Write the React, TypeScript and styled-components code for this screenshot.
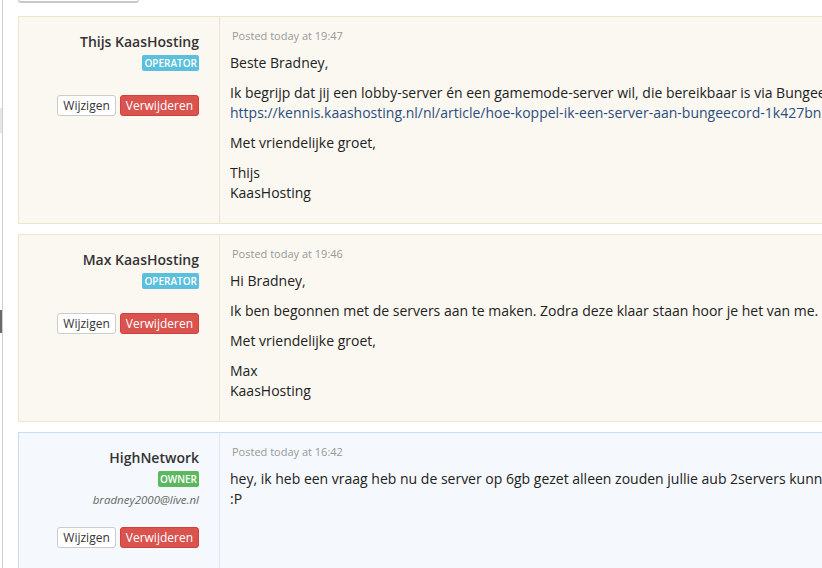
import { createGlobalStyle, styled } from 'styled-components';

const GlobalStyle = createGlobalStyle`
  html, body {
    margin: 0;
    padding: 0;
    background: #fff;
    overflow: hidden;
  }
  body {
    font-family: "Open Sans", "Liberation Sans", sans-serif;
    font-size: 14px;
    color: #333;
  }
  * { box-sizing: border-box; }
`;

type Line = { text: string; link?: boolean };

type Reply = {
  name: string;
  role: 'operator' | 'owner';
  email?: string;
  posted: string;
  paragraphs: Line[][];
};

const replies: Reply[] = [
  {
    name: 'Thijs KaasHosting',
    role: 'operator',
    posted: 'Posted today at 19:47',
    paragraphs: [
      [{ text: 'Beste Bradney,' }],
      [
        {
          text: 'Ik begrijp dat jij een lobby-server én een gamemode-server wil, die bereikbaar is via BungeeCord. Hoe je dit doet lees je hier:',
        },
        {
          text: 'https://kennis.kaashosting.nl/nl/article/hoe-koppel-ik-een-server-aan-bungeecord-1k427bnl/',
          link: true,
        },
      ],
      [{ text: 'Met vriendelijke groet,' }],
      [{ text: 'Thijs' }, { text: 'KaasHosting' }],
    ],
  },
  {
    name: 'Max KaasHosting',
    role: 'operator',
    posted: 'Posted today at 19:46',
    paragraphs: [
      [{ text: 'Hi Bradney,' }],
      [{ text: 'Ik ben begonnen met de servers aan te maken. Zodra deze klaar staan hoor je het van me.' }],
      [{ text: 'Met vriendelijke groet,' }],
      [{ text: 'Max' }, { text: 'KaasHosting' }],
    ],
  },
  {
    name: 'HighNetwork',
    role: 'owner',
    email: 'bradney2000@live.nl',
    posted: 'Posted today at 16:42',
    paragraphs: [
      [
        {
          text: 'hey, ik heb een vraag heb nu de server op 6gb gezet alleen zouden jullie aub 2servers kunnen maken 1 lobby en 1 gamemode',
        },
        { text: ':P' },
      ],
    ],
  },
];

export default function App() {
  return (
    <>
      <GlobalStyle />
      <Page>
        <Sidebar>
          <SideItem $h={108} />
          <SideItem $h={25} $tone="light" />
          <SideItem $h={177} />
          <SideItem $h={23} $tone="dark" />
        </Sidebar>
        <Main>
          <TopButton />
          {replies.map((r) => (
            <Card key={r.posted} $owner={r.role === 'owner'}>
              <Author $owner={r.role === 'owner'}>
                <Name>{r.name}</Name>
                <Badge $role={r.role}>{r.role === 'owner' ? 'Owner' : 'Operator'}</Badge>
                {r.email && <Email>{r.email}</Email>}
                <Actions>
                  <Button>Wijzigen</Button>
                  <Button $danger>Verwijderen</Button>
                </Actions>
              </Author>
              <Body>
                <Posted>{r.posted}</Posted>
                {r.paragraphs.map((lines, i) => (
                  <Para key={i}>
                    {lines.map((line, j) => (
                      <TextLine key={j}>
                        {line.link ? <Link href="#">{line.text}</Link> : line.text}
                      </TextLine>
                    ))}
                  </Para>
                ))}
              </Body>
            </Card>
          ))}
        </Main>
      </Page>
    </>
  );
}

const Page = styled.div`
  display: flex;
  height: 568px;
  overflow: hidden;
`;

const Sidebar = styled.div`
  width: 3px;
  flex-shrink: 0;
  border-right: 1px solid #cfcfcf;
  display: flex;
  flex-direction: column;
`;

const SideItem = styled.div<{ $h: number; $tone?: 'light' | 'dark' }>`
  height: ${(p) => p.$h}px;
  background: ${(p) => (p.$tone === 'light' ? '#e6e6e6' : p.$tone === 'dark' ? '#6a6a6a' : 'transparent')};
`;

const Main = styled.div`
  flex: 1;
  padding-left: 15px;
  overflow: hidden;
`;

const TopButton = styled.div`
  width: 121px;
  height: 3px;
  margin-bottom: 13px;
  border: 1px solid #ccc;
  border-top: 0;
  border-bottom: 2px solid #c8c8c8;
  border-radius: 0 0 3px 3px;
`;

const Card = styled.div<{ $owner?: boolean }>`
  display: flex;
  width: 1100px;
  margin-bottom: 10px;
  border: 1px solid ${(p) => (p.$owner ? '#c9dcf0' : '#efe5cc')};
  background: ${(p) => (p.$owner ? '#f5f8fc' : '#fbf8f1')};
`;

const Author = styled.div<{ $owner?: boolean }>`
  width: 201px;
  flex-shrink: 0;
  padding: 15px 20px 30px 0;
  display: flex;
  flex-direction: column;
  align-items: flex-end;
  text-align: right;
  border-right: 1px solid ${(p) => (p.$owner ? '#dfe6ee' : '#ece4d2')};
`;

const Name = styled.div`
  font-size: 14px;
  line-height: 20px;
  font-weight: 600;
  color: #333;
  margin-bottom: 3px;
`;

const Badge = styled.span<{ $role: 'operator' | 'owner' }>`
  display: block;
  height: 16px;
  padding: 0 2px;
  font-size: 10px;
  line-height: 16px;
  font-weight: 600;
  text-transform: uppercase;
  color: #fff;
  border-radius: 2px;
  background: ${(p) => (p.$role === 'owner' ? '#5cb85c' : '#5bc0de')};
`;

const Email = styled.div`
  margin-top: 5px;
  font-size: 11.5px;
  line-height: 16px;
  font-style: italic;
  color: #666;
`;

const Actions = styled.div`
  margin-top: 24px;
  display: flex;
  justify-content: flex-end;
  gap: 4px;
  ${Email} + & {
    margin-top: 19px;
  }
`;

const Button = styled.button<{ $danger?: boolean }>`
  height: 21px;
  padding: 0 5px;
  font-family: "Open Sans", "Liberation Sans", sans-serif;
  font-size: 12px;
  line-height: 19px;
  border-radius: 3px;
  cursor: pointer;
  color: ${(p) => (p.$danger ? '#fff' : '#333')};
  background: ${(p) => (p.$danger ? '#d9534f' : '#fff')};
  border: 1px solid ${(p) => (p.$danger ? '#d43f3a' : '#ccc')};
`;

const Body = styled.div`
  flex: 1;
  padding: 10px;
  overflow: hidden;
`;

const Posted = styled.div`
  font-size: 11px;
  line-height: 17px;
  color: #999;
  margin: 0 0 9px 2px;
`;

const Para = styled.div`
  margin-bottom: 10px;
  font-size: 14px;
  line-height: 20px;
  color: #222;
`;

const TextLine = styled.div`
  white-space: nowrap;
`;

const Link = styled.a`
  color: #2b4d7e;
  text-decoration: none;
`;
